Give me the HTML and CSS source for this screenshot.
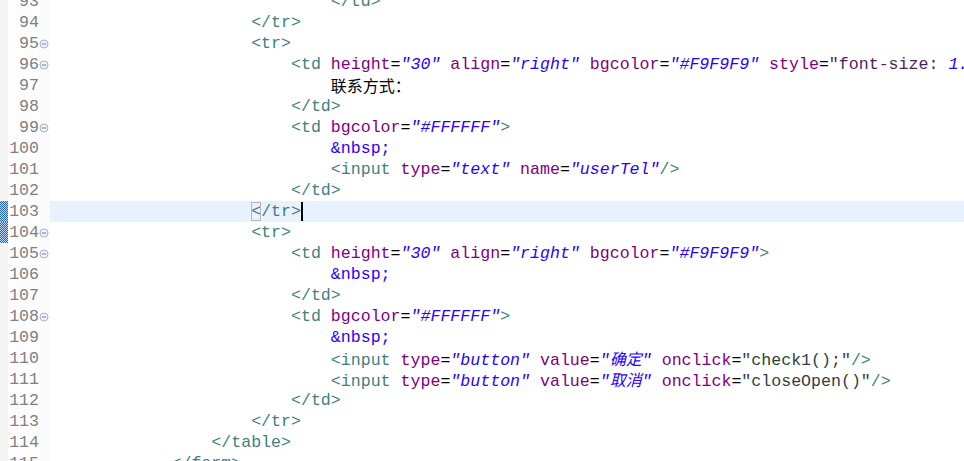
FILE: index.html
```html
<!DOCTYPE html>
<html lang="zh-CN">
<head>
    <meta charset="UTF-8">
    <title>editor</title>
    <link rel="stylesheet" href="styles.css">
</head>
<body>
    <div class="editor">
        <div class="line"><span class="ann"></span><span class="num">93</span><span class="fold"></span><span class="code i7"><span class="tag">&lt;/td&gt;</span></span></div>
        <div class="line"><span class="ann"></span><span class="num">94</span><span class="fold"></span><span class="code i5"><span class="tag">&lt;/tr&gt;</span></span></div>
        <div class="line"><span class="ann"></span><span class="num">95</span><span class="fold"><svg viewBox="0 0 10 10"><circle cx="5" cy="5" r="4"/><line x1="2.8" y1="5" x2="7.2" y2="5"/></svg></span><span class="code i5"><span class="tag">&lt;tr&gt;</span></span></div>
        <div class="line"><span class="ann"></span><span class="num">96</span><span class="fold"><svg viewBox="0 0 10 10"><circle cx="5" cy="5" r="4"/><line x1="2.8" y1="5" x2="7.2" y2="5"/></svg></span><span class="code i6"><span class="tag">&lt;td</span> <span class="attr">height</span>=<span class="val">"30"</span> <span class="attr">align</span>=<span class="val">"right"</span> <span class="attr">bgcolor</span>=<span class="val">"#F9F9F9"</span> <span class="attr">style</span>=<span class="css">"font-size:</span> <span class="val">1.5em;"</span><span class="tag">&gt;</span></span></div>
        <div class="line"><span class="ann"></span><span class="num">97</span><span class="fold"></span><span class="code i7"><span class="cjk">联系方式：</span></span></div>
        <div class="line"><span class="ann"></span><span class="num">98</span><span class="fold"></span><span class="code i6"><span class="tag">&lt;/td&gt;</span></span></div>
        <div class="line"><span class="ann"></span><span class="num">99</span><span class="fold"><svg viewBox="0 0 10 10"><circle cx="5" cy="5" r="4"/><line x1="2.8" y1="5" x2="7.2" y2="5"/></svg></span><span class="code i6"><span class="tag">&lt;td</span> <span class="attr">bgcolor</span>=<span class="val">"#FFFFFF"</span><span class="tag">&gt;</span></span></div>
        <div class="line"><span class="ann"></span><span class="num">100</span><span class="fold"></span><span class="code i7"><span class="ent">&amp;nbsp;</span></span></div>
        <div class="line"><span class="ann"></span><span class="num">101</span><span class="fold"></span><span class="code i7"><span class="tag">&lt;input</span> <span class="attr">type</span>=<span class="val">"text"</span> <span class="attr">name</span>=<span class="val">"userTel"</span><span class="tag">/&gt;</span></span></div>
        <div class="line"><span class="ann"></span><span class="num">102</span><span class="fold"></span><span class="code i6"><span class="tag">&lt;/td&gt;</span></span></div>
        <div class="line current"><span class="ann mark"></span><span class="num">103</span><span class="fold"></span><span class="code i5"><span class="tag"><span class="match">&lt;</span>/tr&gt;</span><span class="caret"></span></span></div>
        <div class="line"><span class="ann mark"></span><span class="num">104</span><span class="fold"><svg viewBox="0 0 10 10"><circle cx="5" cy="5" r="4"/><line x1="2.8" y1="5" x2="7.2" y2="5"/></svg></span><span class="code i5"><span class="tag">&lt;tr&gt;</span></span></div>
        <div class="line"><span class="ann"></span><span class="num">105</span><span class="fold"><svg viewBox="0 0 10 10"><circle cx="5" cy="5" r="4"/><line x1="2.8" y1="5" x2="7.2" y2="5"/></svg></span><span class="code i6"><span class="tag">&lt;td</span> <span class="attr">height</span>=<span class="val">"30"</span> <span class="attr">align</span>=<span class="val">"right"</span> <span class="attr">bgcolor</span>=<span class="val">"#F9F9F9"</span><span class="tag">&gt;</span></span></div>
        <div class="line"><span class="ann"></span><span class="num">106</span><span class="fold"></span><span class="code i7"><span class="ent">&amp;nbsp;</span></span></div>
        <div class="line"><span class="ann"></span><span class="num">107</span><span class="fold"></span><span class="code i6"><span class="tag">&lt;/td&gt;</span></span></div>
        <div class="line"><span class="ann"></span><span class="num">108</span><span class="fold"><svg viewBox="0 0 10 10"><circle cx="5" cy="5" r="4"/><line x1="2.8" y1="5" x2="7.2" y2="5"/></svg></span><span class="code i6"><span class="tag">&lt;td</span> <span class="attr">bgcolor</span>=<span class="val">"#FFFFFF"</span><span class="tag">&gt;</span></span></div>
        <div class="line"><span class="ann"></span><span class="num">109</span><span class="fold"></span><span class="code i7"><span class="ent">&amp;nbsp;</span></span></div>
        <div class="line"><span class="ann"></span><span class="num">110</span><span class="fold"></span><span class="code i7"><span class="tag">&lt;input</span> <span class="attr">type</span>=<span class="val">"button"</span> <span class="attr">value</span>=<span class="val">"<span class="cjk">确定</span>"</span> <span class="attr">onclick</span>=<span class="js">"check1();"</span><span class="tag">/&gt;</span></span></div>
        <div class="line"><span class="ann"></span><span class="num">111</span><span class="fold"></span><span class="code i7"><span class="tag">&lt;input</span> <span class="attr">type</span>=<span class="val">"button"</span> <span class="attr">value</span>=<span class="val">"<span class="cjk">取消</span>"</span> <span class="attr">onclick</span>=<span class="js">"closeOpen()"</span><span class="tag">/&gt;</span></span></div>
        <div class="line"><span class="ann"></span><span class="num">112</span><span class="fold"></span><span class="code i6"><span class="tag">&lt;/td&gt;</span></span></div>
        <div class="line"><span class="ann"></span><span class="num">113</span><span class="fold"></span><span class="code i5"><span class="tag">&lt;/tr&gt;</span></span></div>
        <div class="line"><span class="ann"></span><span class="num">114</span><span class="fold"></span><span class="code i4"><span class="tag">&lt;/table&gt;</span></span></div>
        <div class="line"><span class="ann"></span><span class="num">115</span><span class="fold"></span><span class="code i3"><span class="tag">&lt;/form&gt;</span></span></div>
    </div>
</body>
</html>
```

FILE: styles.css
```css
body {
    margin: 0;
    background-color: #ffffff;
    overflow: hidden;
    font-family: "Liberation Mono", "Noto Sans CJK SC", monospace;
    font-size: 16.6px;
    color: #000000;
}
.editor {
    margin-top: -9px;
}
.line {
    display: flex;
    height: 21px;
    line-height: 21px;
    white-space: pre;
}
.ann {
    flex: 0 0 8px;
    background-color: #f3f3f3;
}
.ann.mark {
    background: repeating-conic-gradient(#2c6cae 0 25%, #b4d0ec 0 50%) 0 0 / 2px 2px;
}
.num {
    flex: 0 0 31px;
    text-align: right;
    color: #808080;
    background-color: #fdfdfd;
}
.fold {
    flex: 0 0 11px;
    display: flex;
    align-items: center;
    background-color: #fbfbfb;
}
.fold svg {
    width: 10px;
    height: 10px;
}
.fold circle {
    fill: #eef3f8;
    stroke: #a4b6c8;
    stroke-width: 1;
}
.fold line {
    stroke: #6f8499;
    stroke-width: 1;
}
.code {
    flex: 1;
    padding-left: 2px;
}
.current .code {
    background-color: #e8f2fe;
}
.i3 { padding-left: calc(2px + 12ch); }
.i4 { padding-left: calc(2px + 16ch); }
.i5 { padding-left: calc(2px + 20ch); }
.i6 { padding-left: calc(2px + 24ch); }
.i7 { padding-left: calc(2px + 28ch); }
.tag {
    color: #3f7f7f;
}
.attr {
    color: #7f007f;
}
.val {
    color: #2a00ff;
    font-style: italic;
}
.css {
    color: #4a1f5e;
}
.ent {
    color: #2a00ff;
}
.js {
    color: #2f3f3f;
}
.cjk {
    font-family: "Noto Sans CJK SC", sans-serif;
    font-size: 16px;
}
.match {
    outline: 1px solid #b8b8b8;
    outline-offset: -1px;
}
.caret {
    display: inline-block;
    width: 2px;
    height: 19px;
    vertical-align: middle;
    background-color: #000000;
}
```
